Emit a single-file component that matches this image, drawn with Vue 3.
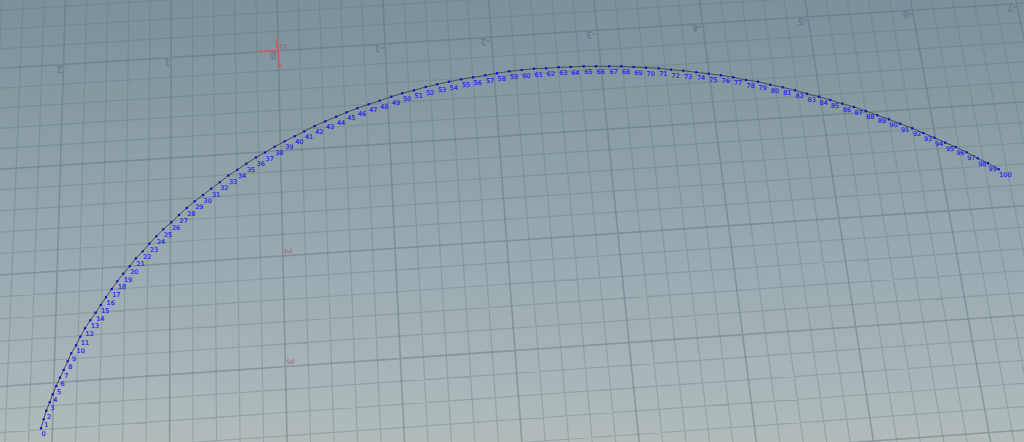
<script setup>
// Projects grid units onto the canvas through the quad spanned by u -2..6, v 0..3
const quad = [[63.5, 64.4], [912.4, 10.2], [968.3, 318.9], [53.8, 382.7]]
const [[x0, y0], [x1, y1], [x2, y2], [x3, y3]] = quad
const sx = x0 - x1 + x2 - x3, sy = y0 - y1 + y2 - y3
const dx1 = x1 - x2, dx2 = x3 - x2, dy1 = y1 - y2, dy2 = y3 - y2
const det = dx1 * dy2 - dx2 * dy1
const g = (sx * dy2 - dx2 * sy) / det
const h = (dx1 * sy - sx * dy1) / det
const project = (u, v) => {
  const s = (u + 2) / 8, t = v / 3
  const w = g * s + h * t + 1
  return [
    ((x1 - x0 + g * x1) * s + (x3 - x0 + h * x3) * t + x0) / w,
    ((y1 - y0 + g * y1) * s + (y3 - y0 + h * y3) * t + y0) / w,
  ]
}
const seg = (a, b) => `M${a.map(n => n.toFixed(2)).join(' ')}L${b.map(n => n.toFixed(2)).join(' ')}`
let major = '', minor = ''
for (let i = -20; i <= 45; i++) {
  const d = seg(project(i / 5, -1.4), project(i / 5, 5))
  if (i % 5 === 0) major += d; else minor += d
}
for (let i = -7; i <= 25; i++) {
  const d = seg(project(-4, i / 5), project(9, i / 5))
  if (i % 5 === 0) major += d; else minor += d
}

const coords = [
  41,428.3, 43.7,419.3, 46.3,410.7, 49.7,402.3, 52.7,394.3, 56.3,386, 60,377.7, 63.7,370, 67.7,361.3, 71.3,353.3,
  76,345.3, 80.3,336.7, 85,328.3, 90.3,320.3, 95.7,312.7, 100.7,305, 106,297.3, 111.7,289, 117.3,281.3, 123.3,273.7,
  129.7,266.3, 136,258.3, 142.7,251.3, 149.3,243.7, 156.3,236.3, 163.3,229.3, 171.3,222.3, 179,215, 186.7,208, 194.7,201.3,
  203,195, 211.3,188.7, 219.7,182.3, 228.3,175.5, 237.3,169.8, 246.3,163.7, 256,157.5, 265,152.5, 274.7,146.7, 284.7,141.3,
  294.7,136.3, 304.3,131.3, 314.7,126, 325.3,121.3, 336.3,116.7, 346.7,112.3, 357.3,108.3, 368.7,104.3, 379.7,100.7, 391.3,96.7,
  402.3,93.3, 414,90.3, 425.7,87, 437.3,84.3, 449,81.7, 461.3,79.3, 473,77.3, 485.3,75.3, 497,73.3, 509.3,71.3,
  521.7,70, 534,68.7, 546,68.3, 558.7,67.3, 570.7,67, 583.7,66.3, 596,66.3, 609,66.3, 621.3,66.3, 633.7,67,
  646,67.7, 658.7,68.3, 671,69.7, 683.3,70.7, 696.3,72.3, 708.7,73.7, 721,75.3, 733.3,77.3, 746,80, 758,81.7,
  770.3,84.7, 782.7,87.3, 795,90.3, 807,93.7, 819,96.7, 830.3,100, 842.3,103.7, 854,107, 865.7,111, 877.3,115.3,
  889,119.3, 900.3,123.7, 912.3,128.3, 923.3,133, 934.3,137.7, 945.3,142.7, 955.7,147, 966.7,152.3, 977.7,158.3, 988,163.3,
  998.7,169.3,
]
const points = []
for (let i = 0; i < coords.length; i += 2) points.push({ id: i / 2, x: coords[i], y: coords[i + 1] })
const curve = points.map(p => `${p.x},${p.y}`).join(' ')

const zLabels = [
  ['2', 59.3, 69.5], ['1', 167, 62.7], ['-1', 379, 49], ['-2', 485, 42], ['-3', 591, 35],
  ['-4', 697, 28], ['-5', 802, 21.5], ['-6', 907.5, 14.7], ['-7', 1012, 8],
]
const xLabels = [['2', 288, 251.3], ['3', 290.5, 361.5]]
</script>

<template>
  <svg class="viewport" width="1024" height="442" viewBox="0 0 1024 442">
    <defs>
      <linearGradient id="backdrop" x1="0" y1="0" x2="0" y2="1">
        <stop offset="0" stop-color="#7b909a" />
        <stop offset="0.5" stop-color="#95a6ad" />
        <stop offset="0.83" stop-color="#a7b4b8" />
        <stop offset="1" stop-color="#b1bbba" />
      </linearGradient>
    </defs>
    <rect width="1024" height="442" fill="url(#backdrop)" />
    <path class="minor" :d="minor" />
    <path class="major" :d="major" />

    <text v-for="[t, x, y] in zLabels" :key="t" class="z-label" :transform="`translate(${x} ${y}) rotate(177)`" y="3.2">{{ t }}</text>
    <text class="z-label" transform="translate(273.5 55.5) rotate(177)" y="3.2">0</text>
    <text class="x-label" transform="translate(283.3 46.3) rotate(90)" y="3.2">0</text>
    <text v-for="[t, x, y] in xLabels" :key="t" class="x-label" :transform="`translate(${x} ${y}) rotate(88)`" y="3.2">{{ t }}</text>
    <path class="x-tick" d="M281.5 146.4H285" />

    <g class="gizmo">
      <path d="M278.4 50.6L279.2 65M278.4 50.8L262 51.4M278.2 50.5L276.3 46.5L277.3 43" />
      <text x="280.5" y="67.8">x</text>
      <text x="277.3" y="43">y</text>
      <text x="261.2" y="53">z</text>
    </g>

    <polyline class="curve" :points="curve" />
    <g v-for="p in points" :key="p.id">
      <rect class="point" :x="p.x - 1.1" :y="p.y - 1.1" width="2.2" height="2.2" />
      <text class="number" :x="p.x + 0.6" :y="p.y + 8">{{ p.id }}</text>
    </g>
  </svg>
</template>

<style scoped>
.viewport { display: block; font-family: "DejaVu Sans", sans-serif; }
.minor { fill: none; stroke: #5b6f7c; stroke-opacity: 0.3; stroke-width: 1.15; }
.major { fill: none; stroke: #5b6f7c; stroke-opacity: 0.44; stroke-width: 1.6; }
.z-label, .x-label { font-size: 9px; text-anchor: middle; stroke-width: 0.5; }
.z-label { fill: #5f6b91; stroke: #5f6b91; opacity: 0.6; }
.x-label { fill: #a0656b; stroke: #a0656b; opacity: 0.6; }
.x-tick { fill: none; stroke: #a0656b; stroke-opacity: 0.6; }
.gizmo path { fill: none; stroke: #e25254; stroke-width: 1.2; }
.gizmo text { fill: #e25254; stroke: #e25254; stroke-width: 0.2; font-size: 6.5px; text-anchor: middle; }
.curve { fill: none; stroke: #3d4649; stroke-width: 0.9; }
.point { fill: #0c0cc8; }
.number { fill: #2a26ee; stroke: #2a26ee; stroke-width: 0.22; font-size: 6.4px; }
</style>
